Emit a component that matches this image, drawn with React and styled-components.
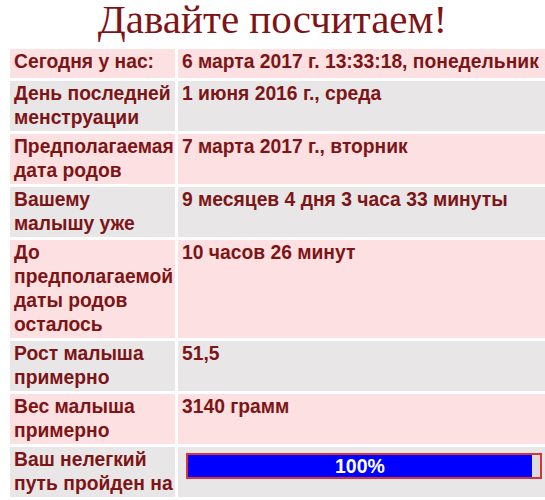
import React from "react";
import styled, { createGlobalStyle } from "styled-components";

const GlobalStyle = createGlobalStyle`
  html, body {
    margin: 0;
    padding: 0;
    background: #ffffff;
    overflow: hidden;
  }
`;

const Page = styled.div`
  width: 545px;
  overflow: hidden;
`;

const Title = styled.h1`
  margin: -1px 0 9px 0;
  font-family: "Liberation Serif", "Times New Roman", serif;
  font-weight: normal;
  font-size: 41px;
  line-height: 41px;
  color: #7d1416;
  text-align: center;
`;

const Grid = styled.div`
  display: grid;
  grid-template-columns: 165px 1fr;
  column-gap: 3px;
  row-gap: 3px;
  margin-left: 10px;
  font-family: "Liberation Sans", Arial, sans-serif;
  font-weight: bold;
  font-size: 19.3px;
  line-height: 24px;
  color: #7d1416;
`;

const Cell = styled.div`
  background: ${(p) => (p.$pink ? "#fde0e1" : "#e8e6e7")};
  padding: 1px 0 ${(p) => (p.$first ? "4px" : "1px")} 4px;
`;

const Bar = styled.div`
  margin: 5px 0 0 4px;
  width: 356px;
  height: 26px;
  box-sizing: border-box;
  border: 2px solid #d8343b;
  background: #dcdadb;
  display: flex;
`;

const Fill = styled.div`
  background: #0000ff;
  color: #ffffff;
  display: flex;
  align-items: center;
  justify-content: center;
  font-size: 19.5px;
  line-height: 22px;
`;

const rows = [
  ["Сегодня у нас:", "6 марта 2017 г. 13:33:18, понедельник"],
  ["День последней менструации", "1 июня 2016 г., среда"],
  ["Предполагаемая дата родов", "7 марта 2017 г., вторник"],
  ["Вашему малышу уже", "9 месяцев 4 дня 3 часа 33 минуты"],
  ["До предполагаемой даты родов осталось", "10 часов 26 минут"],
  ["Рост малыша примерно", "51,5"],
  ["Вес малыша примерно", "3140 грамм"],
];

export default function App() {
  const progress = 97.7;
  return (
    <Page>
      <GlobalStyle />
      <Title>Давайте посчитаем!</Title>
      <Grid>
        {rows.map(([label, value], i) => (
          <React.Fragment key={label}>
            <Cell $pink={i % 2 === 0} $first={i === 0}>{label}</Cell>
            <Cell $pink={i % 2 === 0} $first={i === 0}>{value}</Cell>
          </React.Fragment>
        ))}
        <Cell>Ваш нелегкий путь пройден на</Cell>
        <Cell>
          <Bar>
            <Fill style={{ width: `${progress}%` }}>100%</Fill>
          </Bar>
        </Cell>
      </Grid>
    </Page>
  );
}
